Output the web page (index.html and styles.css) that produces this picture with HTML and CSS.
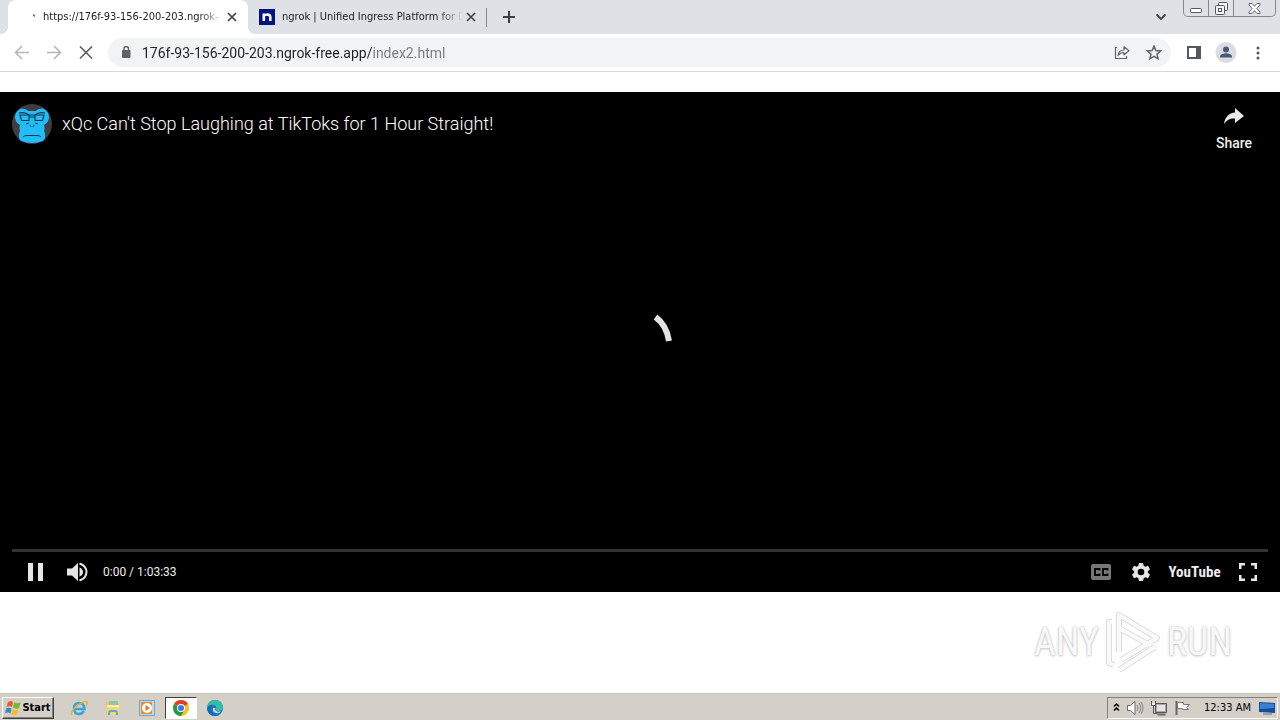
FILE: index.html
```html
<!DOCTYPE html>
<html lang="en">
<head>
<meta charset="utf-8">
<title>176f-93-156-200-203.ngrok-free.app/index2.html</title>
<link rel="stylesheet" href="styles.css">
</head>
<body>
<header class="browser">
  <div class="tabstrip">
    <div class="tab tab-active">
      <svg class="favicon" viewBox="0 0 16 16"><path d="M13 5l2 1v2l-2-1z" fill="#3b78e7"/></svg>
      <span class="tab-title">https://176f-93-156-200-203.ngrok-</span>
      <button class="tab-close" aria-label="Close tab"><svg width="10" height="10" viewBox="0 0 10 10"><path d="M1 1l8 8M9 1l-8 8" stroke="#3c4043" stroke-width="1.6"/></svg></button>
    </div>
    <div class="tab">
      <svg class="favicon" viewBox="0 0 16 16"><path d="M0 0h16v16H0z" fill="#04127f"/><path d="M4.800 12V4.500M4.800 6.700Q6 5.500 8.400 5.500 11.300 5.500 11.300 8.300V12" fill="none" stroke="#fff" stroke-width="2.600"/></svg>
      <span class="tab-title">ngrok | Unified Ingress Platform for D</span>
      <button class="tab-close" aria-label="Close tab"><svg width="10" height="10" viewBox="0 0 10 10"><path d="M1 1l8 8M9 1l-8 8" stroke="#3c4043" stroke-width="1.6"/></svg></button>
    </div>
    <button class="new-tab" aria-label="New tab"><svg width="12" height="12" viewBox="0 0 12 12"><path d="M6 0v12M0 6h12" stroke="#3c4043" stroke-width="2"/></svg></button>
    <button class="tab-search" aria-label="Search tabs"><svg width="12" height="8" viewBox="0 0 12 8"><path d="M1.500 1.500L6 6l4.500-4.500" fill="none" stroke="#3c4043" stroke-width="1.800"/></svg></button>
    <div class="window-controls">
      <button aria-label="Minimize"><svg width="12" height="5" viewBox="0 0 12 5"><rect x=".5" y=".5" width="11" height="4" rx="1" fill="#fff" stroke="#54575e"/></svg></button>
      <button aria-label="Restore"><svg width="13" height="13" viewBox="0 0 13 13"><g fill="#f2f3f5" stroke="#54575e"><rect x="3.500" y=".5" width="9" height="8" rx="1"/><rect x=".5" y="3.500" width="9" height="9" rx="1"/><rect x="3.500" y="6.500" width="3" height="3"/></g></svg></button>
      <button class="window-close" aria-label="Close"><svg width="13" height="11" viewBox="0 0 13 11"><path d="M1 .5h3l2.500 2.800L9 .5h3v1.500L8.800 5.500 12 9v1.500H9L6.500 7.700 4 10.500H1V9l3.200-3.500L1 2z" fill="#fff" stroke="#54575e" stroke-width=".9"/></svg></button>
    </div>
  </div>
  <div class="toolbar">
    <button class="tool" aria-label="Back"><svg width="16" height="16" viewBox="0 0 16 16"><path d="M15 7.500H2M8 1L1.500 7.500 8 14" fill="none" stroke="#b4b6b9" stroke-width="1.600"/></svg></button>
    <button class="tool" aria-label="Forward"><svg width="16" height="16" viewBox="0 0 16 16"><path d="M1 7.500h13M8 1l6.500 6.500L8 14" fill="none" stroke="#b4b6b9" stroke-width="1.600"/></svg></button>
    <button class="tool" aria-label="Stop loading"><svg width="14" height="14" viewBox="0 0 14 14"><path d="M1 .5l12 12M13 .5l-12 12" stroke="#5f6368" stroke-width="1.700"/></svg></button>
    <div class="omnibox">
      <svg class="lock" width="10" height="13" viewBox="0 0 10 13"><rect x="1" y="4" width="8.500" height="8" rx="1" fill="#5f6368"/><path d="M3 5V2.700a2.250 2.250 0 0 1 4.500 0V5" fill="none" stroke="#5f6368" stroke-width="1.400"/></svg>
      <input class="url" type="text" aria-label="Address" value="176f-93-156-200-203.ngrok-free.app/index2.html">
      <button class="tool" aria-label="Share this page"><svg width="16" height="16" viewBox="0 0 16 16"><path d="M3 2.500H1.500v11h11V11" fill="none" stroke="#5f6368" stroke-width="1.200"/><path d="M4 10.500c.5-4 2.500-5.500 6-5.500V1.800l5 4-5 4V7.500c-3 0-4.600 1-6 3z" fill="none" stroke="#5f6368" stroke-width="1.200" stroke-linejoin="round"/></svg></button>
      <button class="tool" aria-label="Bookmark"><svg width="16" height="16" viewBox="0 0 16 16"><path d="M8 1.200l1.900 4.400 4.700.4-3.600 3.100 1.100 4.700L8 11.300l-4.100 2.500L5 9.100 1.400 6l4.700-.4z" fill="none" stroke="#5f6368" stroke-width="1.500"/></svg></button>
    </div>
    <button class="tool" aria-label="Side panel"><svg width="14" height="14" viewBox="0 0 14 14"><path d="M1 1h12v11H1z" fill="none" stroke="#55585d" stroke-width="2"/><path d="M9 1h4v11H9z" fill="#55585d"/></svg></button>
    <button class="tool" aria-label="Profile"><svg width="22" height="22" viewBox="0 0 22 22"><circle cx="11" cy="10.500" r="10.500" fill="#dadde3"/><circle cx="11" cy="7.500" r="3" fill="#4c5878"/><path d="M5 15.500v-1c0-2 4-3.200 6-3.200s6 1.200 6 3.200v1z" fill="#4c5878"/></svg></button>
    <button class="tool" aria-label="Menu"><svg width="4" height="14" viewBox="0 0 4 14"><g fill="#55585d"><circle cx="2" cy="2" r="1.500"/><circle cx="2" cy="7" r="1.500"/><circle cx="2" cy="12" r="1.500"/></g></svg></button>
  </div>
</header>

<main class="page">
  <section class="player" aria-label="Video player">
    <div class="player-top">
      <svg class="avatar" width="40" height="40" viewBox="0 0 40 40"><circle cx="20" cy="20" r="20" fill="#403d3e"/><path d="M10 4.500Q14 4.500 16.500 7h7Q26 4.500 30 4.500 36 6 37 12q.5 6-5 9 1 4 0 6 3 6-1 10-11 4-22 0-4-4-1-10-1-3 0-6-5.500-3-5-9Q4 6 10 4.500z" fill="#20bdfa"/><g fill="none" stroke="#143746" stroke-width="1.200"><path d="M7 9q6-1.500 10 2h6q4-3.500 10-2M8 11h9v5.500H9.500zM23 11h9l-1.500 5.500H23zM17 13h6"/><path d="M14 20l3-1M26 20l-3-1M18 21l1 2M22 21l-1 2M11 33q1-1.500 4-1.500h10q3 0 4 1.500" stroke-width="1"/></g></svg>
      <a class="video-title" href="#">xQc Can't Stop Laughing at TikToks for 1 Hour Straight!</a>
      <button class="share"><svg width="22" height="18" viewBox="0 0 22 18"><path d="M12 1l9 8-9 7v-4.500C7 11 3.500 13 1 17 2 10 6 6 12 5.500z" fill="#e9e9e9"/></svg><span>Share</span></button>
    </div>
    <div class="stage">
      <svg class="spinner" width="64" height="64" viewBox="0 0 64 64"><path d="M47.500 10Q58.500 18 61 34" fill="none" stroke="#e2e2e2" stroke-width="6"/></svg>
    </div>
    <div class="player-bottom">
      <input class="seek" type="range" min="0" max="3813" value="0" aria-label="Seek">
      <div class="controls">
        <button class="control control-play" aria-label="Pause"><svg width="16" height="18" viewBox="0 0 16 18"><path d="M1 0h5v18H1zM11 0h5v18h-5z" fill="#e6e6e6"/></svg></button>
        <button class="control" aria-label="Mute"><svg width="22" height="20" viewBox="0 0 22 20"><path d="M0 6.500h5L11 1v18l-6-5.500H0z" fill="#e6e6e6"/><path d="M12.500 5.500Q16 7 16 10t-3.500 4.500z" fill="#e6e6e6"/><path d="M12.500 1.500Q19.500 4 19.500 10t-7 8.500" fill="none" stroke="#e6e6e6" stroke-width="2"/></svg></button>
        <span class="time">0:00 / 1:03:33</span>
        <button class="control control-right" aria-label="Subtitles"><svg width="20" height="16" viewBox="0 0 20 16"><rect width="20" height="16" rx="2" fill="#777"/><path d="M8.500 6.500V5H4v6h4.500V9.500M16.500 6.500V5H12v6h4.500V9.500" fill="none" stroke="#050505" stroke-width="1.900"/></svg></button>
        <button class="control" aria-label="Settings"><svg width="20" height="20" viewBox="0 0 20 20"><path d="M8 1h4l.7 2.800 1.600.9 2.700-.9 2 3.500-2.100 2v1.400l2.100 2-2 3.500-2.700-.9-1.600.9L12 19H8l-.7-2.800-1.600-.9-2.700.9-2-3.500 2.100-2V9.300L1 7.300l2-3.500 2.700.9 1.600-.9z" fill="#e6e6e6"/><circle cx="10" cy="10" r="3.300" fill="#000"/></svg></button>
        <a class="youtube" href="#">YouTube</a>
        <button class="control" aria-label="Full screen"><svg width="18" height="18" viewBox="0 0 18 18"><path d="M1.250 6V1.250H6M12 1.250h4.750V6M16.750 12v4.750H12M6 16.750H1.250V12" fill="none" stroke="#e6e6e6" stroke-width="2.500"/></svg></button>
      </div>
    </div>
  </section>
  <div class="watermark">
    <span>ANY</span>
    <svg width="60" height="64" viewBox="0 0 60 64"><g fill="none" stroke-linejoin="round"><g stroke="#dcdcdc" stroke-width="6"><path d="M16 42V5l38 23-36 22"/><path d="M9 12H6v41l5 2M16 60l36-23"/><path d="M16 18l32 18"/></g><g stroke="#fafafa" stroke-width="4"><path d="M16 42V5l38 23-36 22"/><path d="M9 12H6v41l5 2M16 60l36-23"/><path d="M16 18l32 18"/></g></g></svg>
    <span>RUN</span>
  </div>
</main>

<footer class="taskbar">
  <button class="start"><svg width="17" height="16" viewBox="0 0 17 16"><path d="M3 2q3-2 5 0L7 7Q4 5.500 1.500 7z" fill="#e95b25"/><path d="M9 2.500q3 1.500 6.500 0L14 8q-3 1.500-6-.5z" fill="#76b82e"/><path d="M1 8.500q3-1.500 5.500 0l-1 5q-3-2-5.500 0z" fill="#3686d6"/><path d="M7.500 9q3 2 6 .5l-1.500 5q-3 1.500-5.500-.5z" fill="#fbbb1c"/></svg><span>Start</span></button>
  <nav class="quick" aria-label="Quick launch">
    <button aria-label="Internet Explorer"><svg width="18" height="18" viewBox="0 0 18 18"><path d="M14 12q-2 3-5 3-5 0-5-5.500Q4 4 9 4t5.500 6H5" fill="none" stroke="#36a4dc" stroke-width="2.500"/><path d="M2 16Q-.5 13 7 7q8-6 10-4 1 1-1 4" fill="none" stroke="#e3b43b" stroke-width="1.500"/></svg></button>
    <button aria-label="Explorer"><svg width="18" height="18" viewBox="0 0 18 18"><path d="M2 3l5-1 1 2h7v12H2z" fill="#e8c75d"/><path d="M5 2h9v5H5z" fill="#8bc7a2"/><path d="M3 6h12v3H3z" fill="#fff2a9"/><path d="M2 8h14l-1 8H3z" fill="#f4d878"/><path d="M5 16v-2q0-2 2-2h4q2 0 2 2v2" fill="none" stroke="#58a9d8" stroke-width="2"/></svg></button>
    <button aria-label="Media Player"><svg width="18" height="18" viewBox="0 0 18 18"><path d="M1 1h16v16H1z" fill="#63a7dd"/><path d="M2 2h14v14H2z" fill="#b9dbee"/><path d="M3 3h11v12H3z" fill="#f58a1b"/><circle cx="9" cy="9" r="5" fill="#fff"/><path d="M7.500 6l4.500 3-4.500 3z" fill="#ef7118"/></svg></button>
    <button class="selected" aria-label="Chrome"><svg width="16" height="16" viewBox="0 0 16 16"><circle cx="8" cy="8" r="8" fill="#fbc116"/><path d="M8 8L1.100 4A8 8 0 0 1 14.900 4z" fill="#e33b2e"/><path d="M8 8L1.100 4A8 8 0 0 0 8 16l3.500-6z" fill="#229a4d"/><circle cx="8" cy="8" r="4" fill="#fff"/><circle cx="8" cy="8" r="3" fill="#3578e5"/></svg></button>
    <button aria-label="Edge"><svg width="18" height="18" viewBox="0 0 18 18"><circle cx="9" cy="9" r="8" fill="#1679c9"/><path d="M1 9Q2 1 9 1t8 7q0 4-5 4-3 0-2-2 1-4-3-4-4 0-6 3z" fill="#36bda5"/><path d="M1 9q2-4 6-3-3 3-1 7t8 2q-2 2-5 2-7 0-8-8z" fill="#176bb2"/><path d="M10 9q-2 1 0 3 2 1.500 5 0-2 3-5 2-4-1-3-5z" fill="#d4d0c8"/></svg></button>
  </nav>
  <div class="tray">
    <button class="tray-more" aria-label="Show hidden icons"><svg width="7" height="10" viewBox="0 0 7 10"><path d="M1 3.500L3.500 1 6 3.500M1 7.500L3.500 5 6 7.500" fill="none" stroke="#000" stroke-width="1.500"/></svg></button>
    <svg width="18" height="16" viewBox="0 0 18 16"><path d="M1.500 5.500h3L9 1.500v13l-4.500-4h-3z" fill="#fff" stroke="#68686a"/><path d="M11 5q2 3 0 6M13 3q3.500 5 0 10M15 2q4 6 0 12" fill="none" stroke="#848484"/></svg>
    <svg width="18" height="16" viewBox="0 0 18 16"><path d="M5.500 3.500h11v9h-11z" fill="#aaa" stroke="#555"/><path d="M7 5h8v6H7z" fill="#e4e4e4"/><path d="M7.500 14.500h8" stroke="#666" stroke-width="2"/><path d="M1.500 1v4.500h4V1M3.500 5.500v8h4" fill="none" stroke="#555"/><path d="M2 3h3v2H2z" fill="#fff"/></svg>
    <svg width="18" height="16" viewBox="0 0 18 16"><path d="M2.500 1v14" stroke="#666" stroke-width="2"/><path d="M3.500 2.500h6v2h6l-3 3 2 2H8.500v-1h-5z" fill="#fff" stroke="#777"/></svg>
    <time class="clock">12:33 AM</time>
    <svg width="16" height="14" viewBox="0 0 16 14"><path d="M0 1l16 1v10L0 11z" fill="#174b9c"/><path d="M1 2l14 1v4L1 8z" fill="#3c80d2"/><path d="M4 13h9" stroke="#526987"/></svg>
  </div>
</footer>
</body>
</html>
```
FILE: styles.css
```css
* { box-sizing: border-box; }
body {
  margin: 0;
  min-height: 100vh;
  display: flex;
  flex-direction: column;
  background: #fff;
  font-family: "DejaVu Sans Condensed", "Noto Sans", sans-serif;
  font-size: 11px;
  color: #202124;
}
button {
  display: flex;
  align-items: center;
  justify-content: center;
  padding: 0;
  border: 0;
  background: none;
  font: inherit;
  color: inherit;
}
svg { display: block; flex: none; }
a { color: inherit; text-decoration: none; }

.tabstrip {
  display: flex;
  height: 34px;
  padding: 0 4px 0 8px;
  background: #dee1e6;
}
.tab {
  display: flex;
  align-items: center;
  width: 239px;
  padding: 0 8px 0 11px;
  position: relative;
}
.tab-active {
  width: 240px;
  padding-left: 12px;
  background: #fff;
  border-radius: 8px 8px 0 0;
}
.tab-active::before, .tab-active::after {
  content: "";
  position: absolute;
  bottom: 0;
  width: 8px;
  height: 8px;
}
.tab-active::before { right: 100%; background: radial-gradient(circle at 0 0, #dee1e6 8px, #fff 8px); }
.tab-active::after { left: 100%; background: radial-gradient(circle at 100% 0, #dee1e6 8px, #fff 8px); }
.tab:not(.tab-active)::after {
  content: "";
  position: absolute;
  right: 0;
  top: 8px;
  height: 19px;
  border-right: 1px solid #85888d;
}
.favicon { width: 16px; height: 16px; margin-right: 7px; }
.tab-title {
  flex: 1;
  min-width: 0;
  overflow: hidden;
  white-space: nowrap;
  line-height: 16px;
  -webkit-mask-image: linear-gradient(to right, #000 86%, transparent);
  mask-image: linear-gradient(to right, #000 86%, transparent);
}
.tab-close { width: 16px; height: 16px; }
.new-tab { width: 44px; }
.tab-search { width: 30px; margin-left: auto; margin-right: 7px; }
.window-controls {
  display: flex;
  height: 17px;
  width: 93px;
  border: 1px solid #85888f;
  border-top: 0;
  border-radius: 0 0 5px 5px;
}
.window-controls button { width: 25px; border-right: 1px solid #85888f; }
.window-controls button:first-child { padding-top: 4px; }
.window-controls .window-close { flex: 1; border-right: 0; }

.toolbar {
  display: flex;
  align-items: center;
  height: 38px;
  padding: 0 6px;
  border-bottom: 1px solid #d5d7da;
}
.tool { width: 32px; height: 28px; }
.omnibox {
  flex: 1;
  display: flex;
  align-items: center;
  height: 29px;
  margin: 0 7px 0 6px;
  padding: 0 1px 0 13px;
  border-radius: 15px;
  background: #f1f3f4;
}
.url {
  flex: 1;
  min-width: 0;
  margin-left: 11px;
  padding: 0;
  border: 0;
  outline: 0;
  font: 14px/20px Roboto, sans-serif;
  background: linear-gradient(to right, #202124 231px, #777b80 231px);
  -webkit-background-clip: text;
  background-clip: text;
  color: transparent;
}

.page {
  flex: 1;
  display: flex;
  flex-direction: column;
  padding-top: 20px;
}
.player {
  display: flex;
  flex-direction: column;
  min-height: 500px;
  padding: 12px 12px 0;
  background: #000;
  color: #eee;
  font-family: Roboto, sans-serif;
}
.player-top { display: flex; align-items: flex-start; gap: 10px; }
.video-title { flex: 1; font-size: 18px; font-weight: 300; line-height: 40px; color: #fff; }
.share {
  flex-direction: column;
  width: 68px;
  padding-top: 3px;
  gap: 8px;
  font-size: 14px;
  font-weight: 500;
  line-height: 20px;
}
.stage { flex: 1; display: grid; place-items: center; }
.spinner { margin-bottom: 24px; }
.seek {
  display: block;
  appearance: none;
  width: 100%;
  height: 3px;
  margin: 0;
  background: #333;
}
.seek::-webkit-slider-thumb { appearance: none; width: 0; height: 0; }
.controls { display: flex; align-items: center; height: 40px; }
.control { width: 40px; height: 40px; }
.control-play { width: 46px; }
.control-right { margin-left: auto; }
.time { padding-left: 5px; font-size: 12px; }
.youtube {
  width: 67px;
  text-align: center;
  font: bold 15px/20px "Roboto Condensed", "Liberation Sans Narrow", "Liberation Sans", sans-serif;
}
.watermark {
  display: flex;
  align-items: center;
  justify-content: flex-end;
  gap: 4px;
  padding: 18px 48px 0 0;
  font: 38px/64px "Roboto Condensed", "Liberation Sans Narrow", sans-serif;
  color: #f8f8f8;
  text-shadow: 0 0 2px #bbb, 0 1px 3px #ccc;
}

.taskbar {
  display: flex;
  align-items: center;
  height: 27px;
  padding: 1px 2px 0;
  border-top: 1px solid #c8c5bd;
  background: #d4d0c8;
  color: #000;
}
.start {
  width: 52px;
  height: 22px;
  border: 1px solid;
  border-color: #fff #404040 #404040 #fff;
  box-shadow: inset -1px -1px #808080;
  font-weight: bold;
}
.quick { display: flex; margin-left: 8px; }
.quick button { width: 34px; height: 22px; }
.quick .selected {
  width: 32px;
  margin: 0 1px;
  border: 1px solid;
  border-color: #404040 #fff #fff #404040;
  background: #fff;
}
.tray {
  display: flex;
  align-items: center;
  height: 22px;
  margin-left: auto;
  padding: 0 2px 0 5px;
  gap: 6px;
  border: 1px solid;
  border-color: #808080 #fff #fff #808080;
}
.clock { padding: 0 2px 0 6px; }
```
